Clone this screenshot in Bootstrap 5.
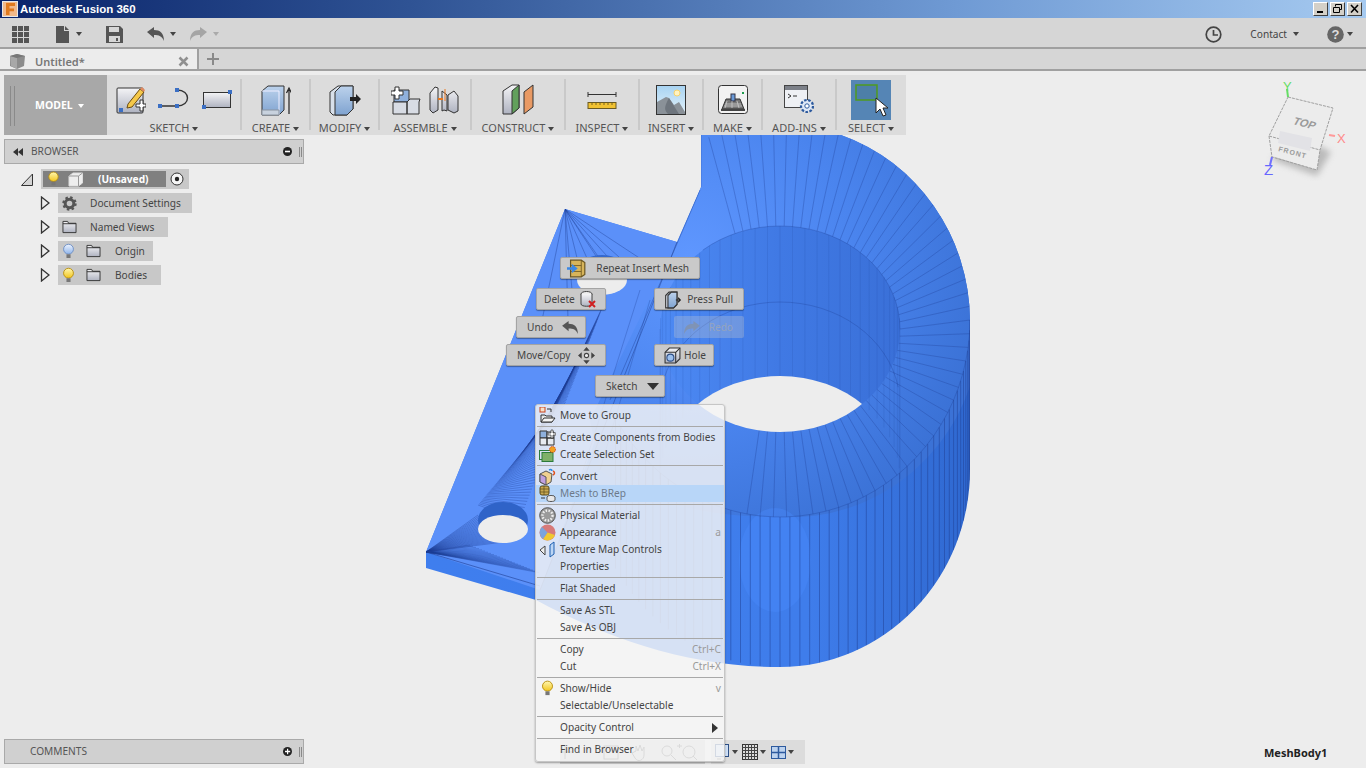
<!DOCTYPE html>
<html lang="en">
<head>
<meta charset="utf-8">
<title>Autodesk Fusion 360</title>
<link href="https://cdn.jsdelivr.net/npm/bootstrap@5.3.0/dist/css/bootstrap.min.css" rel="stylesheet">
<style>
html,body{height:768px;overflow:hidden}
body{background:#ededed;font-family:"Noto Sans","Liberation Sans",sans-serif;font-size:10.15px;color:#444;line-height:1.2}
.title-strip{height:18px;background:linear-gradient(90deg,#0a246a 0%,#2f5394 30%,#6f9ad4 70%,#a6caf0 100%);color:#fff;font:bold 11.5px "Liberation Sans",sans-serif}
.app-ico{width:16px;height:16px;margin:1px 2px;background:#e8e8e8}
.win-btn{width:15px;height:14px;background:#d4d0c8;border:1px solid;border-color:#fff #404040 #404040 #fff;margin-left:2px;padding:0}
.win-btn svg{display:block}
.top-strip{height:31px;background:#d6d6d6;border-bottom:2px solid #a0a0a0;padding-top:3px}
.tab-strip{height:22px;background:#d6d6d6;border-bottom:2px solid #a0a0a0}
.doc-tab{width:199px;background:#ececec;border-right:2px solid #a0a0a0;font-size:11px;font-weight:600;color:#777;padding-top:5px}
.stage{flex:1 1 auto;position:relative;padding:4px;min-height:0}
.model-canvas{position:absolute;left:0;top:-71px;width:1366px;height:768px}
.ribbon{position:relative;width:902px;height:60px;background:#dcdcdc}
.model-box{width:103px;background:#a8a8a8;color:#fff;font-weight:700;font-size:10.5px;padding-top:1px}
.grip{width:5px;height:40px;border-left:1px solid #8a8a8a;border-right:1px solid #8a8a8a;margin-left:6px}
.rib-group{position:relative;padding-top:3px}
.rib-group:not(:last-child)::after{content:"";position:absolute;right:-1px;top:4px;bottom:5px;width:2px;background:#c9c9c9}
.rib-icons{height:43px}
.gap-rib{gap:12px}
.rib-label{font-size:11px;color:#555;white-space:nowrap}
.caret-dn{display:inline-block;width:0;height:0;border-left:3.5px solid transparent;border-right:3.5px solid transparent;border-top:4.5px solid #444;vertical-align:middle;margin-left:3px}
.caret-lt{border-top-color:#aaa}
.caret-wh{border-top-color:#fff}
.w-a{width:134px}.w-b{width:69px}.w-c{width:92px}.w-d{width:94px}.w-e{width:74px}.w-f{width:64px}.w-g{width:59px}.w-h{width:74px}.w-i{width:70px}
.sel-tile{width:40px;height:40px;background:#5585b5;position:relative}
.side-head{position:relative;width:300px;height:25px;background:#d0d0d0;border:1px solid #a9a9a9;color:#555;font-size:10.15px}
.tree-wrap{position:relative;width:300px;padding:5px 0 0 17px}
.tree-row{height:20px;margin-bottom:4px}
.tree-chip{height:20px;background:#c8c8c8;color:#444}
.root-inner{height:16px;background:#808080;color:#fff;font-weight:700;margin-left:2px;width:123px}
.w-t1{width:148px}.w-t2{width:134px}.w-t3{width:110px}.w-t4{width:95px}.w-t5{width:103px}
.comments-bar{margin-top:auto}
.stage-col{height:100%;display:flex;flex-direction:column;align-items:flex-start}
.floating{position:absolute;left:0;top:-71px;width:1366px;height:768px;pointer-events:none}
.mark-btn{position:absolute;height:22px;padding:1px 10px 0;display:flex;align-items:center;background:#c9c9c9;border:1px solid #a4a4a4;border-radius:2px;box-shadow:0 1px 1px rgba(0,0,0,.35);color:#444;font-size:10.15px;white-space:nowrap}
.mark-btn.dim{--bs-btn-disabled-color:#95a4be;--bs-btn-disabled-bg:rgba(205,205,205,.3);--bs-btn-disabled-border-color:transparent;--bs-btn-disabled-opacity:1;background:rgba(205,205,205,.3);border-color:transparent;box-shadow:none;color:#95a4be}
.mb-a{left:560px;top:257px;width:140px}.mb-b{left:536px;top:288px;width:70px}.mb-c{left:654px;top:288px;width:90px}
.mb-d{left:516px;top:316px;width:70px}.mb-e{left:674px;top:316px;width:70px}.mb-f{left:506px;top:344px;width:100px}
.mb-g{left:654px;top:344px;width:60px;padding-right:7px}.mb-h{left:595px;top:375px;width:70px}
.ctx-menu{position:absolute;left:535px;top:404px;width:190px;height:358px;min-width:0;padding:2px 0 0;background:rgba(245,245,245,.83);border:1px solid #c6c6c6;border-radius:3px;box-shadow:0 1px 2px rgba(0,0,0,.35);margin:0;z-index:5}
.ctx-menu .dropdown-item{position:relative;height:17px;padding:0 5px 0 24px;font-size:10.15px;line-height:17px;color:#444;background:transparent}
.ctx-menu .dropdown-item.hot{background:#b8d6f8;color:#6d7a8a}
.ctx-menu .dropdown-divider{margin:2px 1px;height:1px;border-top:1px solid #a8a8a8;opacity:1}
.ctx-ico{position:absolute;left:3px;top:0;width:17px;height:17px}
.ctx-key{position:absolute;right:3px;top:0;color:#9a9a9a}
.arrow-rt{position:absolute;right:6px;top:4px;width:0;height:0;border-top:5px solid transparent;border-bottom:5px solid transparent;border-left:6px solid #333}
.nav-strip{position:absolute;top:740px;height:24px;background:#cfcfcf;align-items:center}
.nav-a{left:560px;width:145px}.nav-b{left:711px;width:94px;background:#dcdcdc}
.mesh-name{position:absolute;left:1264px;top:746px;font-weight:700;font-size:11px;color:#222}
.cube-svg{position:absolute;left:1250px;top:70px;width:110px;height:120px}
</style>
</head>
<body class="d-flex flex-column">
<svg width="0" height="0" class="position-absolute">
<defs>
<linearGradient id="gBulb" x1="0" y1="0" x2="0" y2="1"><stop offset="0" stop-color="#fff7b0"/><stop offset="1" stop-color="#f2c51c"/></linearGradient>
<linearGradient id="gBlueB" x1="0" y1="0" x2="0" y2="1"><stop offset="0" stop-color="#eef4ff"/><stop offset="1" stop-color="#8fb4ea"/></linearGradient>
<linearGradient id="gBox" x1="0" y1="0" x2="0" y2="1"><stop offset="0" stop-color="#f4f4f6"/><stop offset="1" stop-color="#aeb2c0"/></linearGradient>
<linearGradient id="gBlue" x1="0" y1="0" x2="0" y2="1"><stop offset="0" stop-color="#bcd2ec"/><stop offset="1" stop-color="#7fa3d0"/></linearGradient>
<symbol id="bulbY" viewBox="0 0 14 18"><circle cx="7" cy="6.5" r="5.3" fill="url(#gBulb)" stroke="#b98f10"/><rect x="4.8" y="12" width="4.4" height="4" fill="#777"/></symbol>
<symbol id="bulbB" viewBox="0 0 14 18"><circle cx="7" cy="6.5" r="5.3" fill="url(#gBlueB)" stroke="#6d8fc4"/><rect x="4.8" y="12" width="4.4" height="4" fill="#777"/></symbol>
<symbol id="folder" viewBox="0 0 16 15"><path d="M1 13.5V1.5h5l1 2h8v10z" fill="url(#gBox)" stroke="#333"/><path d="M1 4h14" stroke="#333"/></symbol>
<symbol id="triOpen" viewBox="0 0 10 14"><path d="M1.500 1 9 7l-7.500 6z" fill="#ededed" stroke="#333" stroke-width="1.300"/></symbol>
</defs>
</svg>

<header class="title-strip d-flex align-items-center">
  <span class="app-ico d-flex align-items-center justify-content-center"><svg width="14" height="14" viewBox="0 0 14 14"><rect width="14" height="14" fill="#f2b98a"/><path d="M3 1h9v3H6.500v2.500H11v2.700H6.500V13H3z" fill="#e07a1f"/></svg></span>
  <span>Autodesk Fusion 360</span>
  <span class="ms-auto d-flex me-1">
    <button class="win-btn" type="button" aria-label="Minimize"><svg width="13" height="12" viewBox="0 0 13 12"><rect x="3" y="8" width="6" height="2" fill="#000"/></svg></button>
    <button class="win-btn" type="button" aria-label="Restore"><svg width="13" height="12" viewBox="0 0 13 12"><path d="M4.500 3.500V1.500h6v5h-2M2.500 4.500h6v5h-6z" fill="none" stroke="#000"/></svg></button>
    <button class="win-btn" type="button" aria-label="Close"><svg width="13" height="12" viewBox="0 0 13 12"><path d="M3 2l7 7.500M10 2l-7 7.500" stroke="#000" stroke-width="1.600"/></svg></button>
  </span>
</header>

<nav class="top-strip d-flex align-items-center">
  <svg style="margin-left:12px;margin-right:27px" width="17" height="17" viewBox="0 0 17 17" fill="#555"><path d="M0 0h5v5H0zM6 0h5v5H6zM12 0h5v5h-5zM0 6h5v5H0zM6 6h5v5H6zM12 6h5v5h-5zM0 12h5v5H0zM6 12h5v5H6zM12 12h5v5h-5z"/></svg>
  <svg width="14" height="17" viewBox="0 0 14 17" fill="#555"><path d="M0 0h8v5h5v12H0zM9 0l4 4H9z"/></svg>
  <span class="caret-dn" style="margin-left:6px"></span>
  <svg style="margin-left:24px" width="17" height="17" viewBox="0 0 17 17"><path fill="#555" d="M0 0h14l3 3v14H0z"/><path fill="#d6d6d6" d="M3 1h10v5H3zM3 10h11v6H3z"/><path fill="#555" d="M10 12h2v3h-2z"/></svg>
  <svg class="ms-4" width="17" height="14" viewBox="0 0 17 14"><path fill="#555" d="M0 5 7 0v3c6 0 10 3 10 11-2-5-5-6-10-6v3z"/></svg>
  <span class="caret-dn" style="margin-left:6px"></span>
  <svg style="margin-left:14px" width="17" height="14" viewBox="0 0 17 14"><path fill="#a5a5a5" d="M17 5 10 0v3C4 3 0 6 0 14c2-5 5-6 10-6v3z"/></svg>
  <span class="caret-dn caret-lt" style="margin-left:6px"></span>
  <span class="ms-auto d-flex align-items-center">
    <svg width="17" height="17" viewBox="0 0 17 17"><circle cx="8.500" cy="8.500" r="7.300" fill="none" stroke="#444" stroke-width="1.700"/><path d="M8.500 4v5H13" fill="none" stroke="#444" stroke-width="1.700"/></svg>
    <span style="margin-left:28px">Contact</span><span class="caret-dn" style="margin-left:6px"></span>
    <svg style="margin-left:28px" width="17" height="17" viewBox="0 0 17 17"><circle cx="8.500" cy="8.500" r="8.300" fill="#666"/><text x="8.500" y="13" text-anchor="middle" fill="#ddd" font-family="Liberation Sans" font-weight="700" font-size="13">?</text></svg>
    <span class="caret-dn" style="margin-right:13px;margin-left:3px"></span>
  </span>
</nav>

<div class="tab-strip d-flex">
  <div class="doc-tab d-flex align-items-center">
    <svg class="ms-2" width="19" height="19" viewBox="0 0 19 19"><path d="M2 4l7-2 8 2-1 10-7 3-7-3z" fill="#8c8c8c"/><path d="M2 4l7 2v11l-6-3z" fill="#a8a8a8"/><path d="M2 4l7-2 8 2-8 2z" fill="#777"/></svg>
    <span class="ms-2">Untitled*</span>
    <svg class="ms-auto me-2" width="11" height="11" viewBox="0 0 11 11"><path d="M1.500 1.500l8 8M9.500 1.500l-8 8" stroke="#909090" stroke-width="2.500"/></svg>
  </div>
  <div class="d-flex align-items-center"><svg style="margin-left:8px" width="12" height="12" viewBox="0 0 12 12"><path d="M6 0v12M0 6h12" stroke="#8a8a8a" stroke-width="2"/></svg></div>
</div>

<main class="stage">
  <svg id="model" class="model-canvas" viewBox="0 0 1366 768" aria-hidden="true">
    <defs>
      <radialGradient id="gTop" gradientUnits="userSpaceOnUse" cx="690" cy="260" r="300"><stop offset="0" stop-color="#5f97ff"/><stop offset=".55" stop-color="#4a84ee"/><stop offset="1" stop-color="#3b72d6"/></radialGradient>
      <linearGradient id="gInner" x1="0" y1="0" x2="1" y2="0"><stop offset="0" stop-color="#4d8af4"/><stop offset=".5" stop-color="#4079e4"/><stop offset="1" stop-color="#3a70d8"/></linearGradient>
      <linearGradient id="gWall" x1="0" y1="0" x2="1" y2="0"><stop offset="0" stop-color="#3f7eee"/><stop offset=".7" stop-color="#3f7deb"/><stop offset="1" stop-color="#2f68d0"/></linearGradient>
      <clipPath id="cSil"><path d="M701,135 L841,135 A190,197 0 0 1 970,320 L970,470 A190,197 0 0 1 780,667 C690,667 610,640 536,600 L426,568 L426,552 L565,209 L677,242 L701,187 Z"/></clipPath>
      <clipPath id="cInner"><ellipse cx="780" cy="329" rx="120" ry="103"/></clipPath>
    </defs>
    <path d="M701,135 L841,135 A190,197 0 0 1 970,320 L970,470 A190,197 0 0 1 780,667 C690,667 610,640 536,600 L426,568 L426,552 L565,209 L677,242 L701,187 Z" fill="url(#gWall)"/>
    <path d="M565,209 L677,242 L610,400 L540,590 L426,552 Z" fill="#5b90f9"/>
    <g clip-path="url(#cSil)">
      <path d="M677,242 L701,187 L701,120 L860,120 L980,240 L980,340 A190,197 0 0 1 780,517 C700,517 640,500 600,470 L590,420 Z" fill="url(#gTop)"/>
      <ellipse cx="780" cy="329" rx="120" ry="103" fill="url(#gInner)"/>
      <ellipse cx="775" cy="560" rx="36" ry="52" fill="#4a8cff" opacity=".35"/>
      <g id="lines" fill="none" stroke="#1f3f94" stroke-opacity=".42" stroke-width="1"></g>
      <g clip-path="url(#cInner)"><ellipse cx="780" cy="479" rx="120" ry="103" fill="#ededed"/></g>
      <ellipse cx="602" cy="272" rx="25" ry="17" fill="#3568cc"/>
      <ellipse cx="602" cy="280" rx="25" ry="15" fill="#ededed"/>
      <ellipse cx="503" cy="520" rx="25" ry="18" fill="#2f63c8"/>
      <ellipse cx="503" cy="529" rx="25" ry="14" fill="#ededed"/>
    </g>
  </svg>

  <div class="stage-col position-relative">
    <section class="ribbon d-flex">
      <div class="model-box d-flex align-items-center">
        <span class="grip"></span>
        <span style="margin-left:20px">MODEL</span><span class="caret-dn caret-wh" style="margin-left:5px"></span>
      </div>
      <div class="rib-group w-a d-flex flex-column align-items-center">
        <div class="rib-icons d-flex align-items-center gap-rib">
          <svg width="30" height="30" viewBox="0 0 30 30"><rect x="1" y="3" width="26" height="25" rx="1" fill="url(#gBox)" stroke="#333"/><rect x="3" y="23" width="4" height="4" fill="#3b6fc4"/><path d="M12 19 24 4l4 3-12 15-5 1z" fill="#f5c84a" stroke="#6b4b10"/><path d="M24 4l4 3 1-2-3-3z" fill="#e08a60"/><path d="M20 19h4v-4h3v4h3v3h-3v4h-3v-4h-4z" fill="#fff" stroke="#333"/></svg>
          <svg width="32" height="24" viewBox="0 0 32 24"><path d="M2 18h18M19 2c14 0 14 16 0 16" fill="none" stroke="#333" stroke-width="1.400"/><rect x="0" y="16" width="4" height="4" fill="#3b6fc4"/><rect x="17" y="16" width="4" height="4" fill="#3b6fc4"/><rect x="17" y="0" width="4" height="4" fill="#3b6fc4"/></svg>
          <svg width="30" height="20" viewBox="0 0 30 20"><rect x="1.500" y="2.500" width="27" height="15" fill="url(#gBox)" stroke="#333"/><rect x="26" y="0" width="4" height="4" fill="#3b6fc4"/><rect x="0" y="15" width="4" height="4" fill="#3b6fc4"/></svg>
        </div>
        <div class="rib-label">SKETCH<span class="caret-dn"></span></div>
      </div>
      <div class="rib-group w-b d-flex flex-column align-items-center">
        <div class="rib-icons d-flex align-items-center">
          <svg width="30" height="32" viewBox="0 0 30 32"><path d="M1 7l6-5h16v24l-5 5H1z" fill="url(#gBlue)" stroke="#333"/><path d="M1 7h17v24" fill="none" stroke="#eef"/><path d="M1 26h17v5H1z" fill="#c8d2de" stroke="#8a94a0"/><path d="M28 30V6M25.500 9 28 4l2.500 5" fill="none" stroke="#222" stroke-width="1.200"/></svg>
        </div>
        <div class="rib-label">CREATE<span class="caret-dn"></span></div>
      </div>
      <div class="rib-group w-b d-flex flex-column align-items-center">
        <div class="rib-icons d-flex align-items-center">
          <svg width="32" height="32" viewBox="0 0 32 32"><path d="M1 8l8-6h15v23l-6 6H4l-3-3z" fill="#d8e0ea" stroke="#333"/><path d="M6 8l6-6h12v23l-6 6H6z" fill="url(#gBlue)" stroke="#333"/><path d="M21 13h6v-3l5 5-5 5v-3h-6z" fill="#222"/></svg>
        </div>
        <div class="rib-label">MODIFY<span class="caret-dn"></span></div>
      </div>
      <div class="rib-group w-c d-flex flex-column align-items-center">
        <div class="rib-icons d-flex align-items-center gap-2">
          <svg width="30" height="30" viewBox="0 0 30 30"><path d="M3 17V5h12l3 0v12z" fill="#8fb0dc" stroke="#333"/><path d="M2 17h14v12H2zM16 17l3-3h10l-1 3v12H16z" fill="#d8dce4" stroke="#333"/><path d="M0 6h4V2h4v4h4v4H8v4H4v-4H0z" fill="#fff" stroke="#333"/></svg>
          <svg width="30" height="30" viewBox="0 0 30 30"><path d="M1 8l5-6 3 1v22l-5 3-3-3zM13 6l5 4v16l-3-1-2 1zM19 10l6-4 4 5v15l-4 2-6-3z" fill="url(#gBox)" stroke="#333"/><path d="M9 14h5" stroke="#e8761c" stroke-width="2"/><path d="M16 4v12" stroke="#e8761c"/></svg>
        </div>
        <div class="rib-label">ASSEMBLE<span class="caret-dn"></span></div>
      </div>
      <div class="rib-group w-d d-flex flex-column align-items-center">
        <div class="rib-icons d-flex align-items-center">
          <svg width="32" height="32" viewBox="0 0 32 32"><path d="M1 7l9-6h7v23l-7 6H1z" fill="url(#gBox)" stroke="#333"/><path d="M10 7l7-6v23l-7 6z" fill="#62a05c" stroke="#333"/><path d="M22 8l9-7v22l-9 7z" fill="#e99a64" stroke="#333"/></svg>
        </div>
        <div class="rib-label">CONSTRUCT<span class="caret-dn"></span></div>
      </div>
      <div class="rib-group w-e d-flex flex-column align-items-center">
        <div class="rib-icons d-flex align-items-center">
          <svg width="30" height="22" viewBox="0 0 30 22"><path d="M1 3v5M29 3v5M1 5.500h28" stroke="#333" fill="none"/><rect x="1" y="13.500" width="28" height="6" fill="#f1c232" stroke="#6b5a20"/><path d="M5 14v2M9 14v2M13 14v2M17 14v2M21 14v2M25 14v2" stroke="#7a6420"/></svg>
        </div>
        <div class="rib-label">INSPECT<span class="caret-dn"></span></div>
      </div>
      <div class="rib-group w-f d-flex flex-column align-items-center">
        <div class="rib-icons d-flex align-items-center">
          <svg width="30" height="30" viewBox="0 0 30 30"><defs><linearGradient id="gSky" x1="0" y1="0" x2="0" y2="1"><stop offset="0" stop-color="#a7d3f2"/><stop offset="1" stop-color="#e4f2fa"/></linearGradient></defs><rect x=".5" y=".5" width="29" height="29" fill="url(#gSky)" stroke="#333"/><circle cx="21" cy="8" r="3" fill="#fff3c0" stroke="#f7d36b"/><path d="M1 29V17l9-5 3 1 5 7 5-3 6 10v2z" fill="#8a9198"/><path d="M13 13l10 16H12c-4-4-4-7 1-16z" fill="#6e757d"/></svg>
        </div>
        <div class="rib-label">INSERT<span class="caret-dn"></span></div>
      </div>
      <div class="rib-group w-g d-flex flex-column align-items-center">
        <div class="rib-icons d-flex align-items-center">
          <svg width="30" height="29" viewBox="0 0 30 29"><rect x=".5" y=".5" width="29" height="28" rx="3" fill="#f2f2f2" stroke="#333"/><rect x="24" y="7" width="2" height="2" fill="#1c9c4c"/><path d="M4 24l4-10h14l4 10z" fill="#777" stroke="#333"/><rect x="13" y="9" width="4" height="7" fill="#6a9ad8" stroke="#334"/><path d="M7 19h16M6 21h18M9 16l-2 7M14 16v7M19 16l2 7" stroke="#ccc" stroke-width=".8"/><rect x="3" y="24" width="24" height="2" fill="#444"/></svg>
        </div>
        <div class="rib-label">MAKE<span class="caret-dn"></span></div>
      </div>
      <div class="rib-group w-h d-flex flex-column align-items-center">
        <div class="rib-icons d-flex align-items-center">
          <svg width="30" height="29" viewBox="0 0 30 29"><rect x=".5" y=".5" width="23" height="22" fill="#eef0f4" stroke="#444"/><rect x="1" y="1" width="22" height="4" fill="#7c8088"/><path d="M4 9l3 2-3 2M9 11h4" fill="none" stroke="#333"/><circle cx="23" cy="21" r="6" fill="#dfe8f6" stroke="#2d5a9e" stroke-width="2.200" stroke-dasharray="2.600 1.500"/><circle cx="23" cy="21" r="2.200" fill="#fff" stroke="#2d5a9e"/></svg>
        </div>
        <div class="rib-label">ADD-INS<span class="caret-dn"></span></div>
      </div>
      <div class="rib-group w-i d-flex flex-column align-items-center">
        <div class="rib-icons d-flex align-items-center">
          <div class="sel-tile"><svg width="40" height="40" viewBox="0 0 40 40"><rect x="5" y="5" width="21" height="15" fill="#4d7fa8" stroke="#4f9a1f" stroke-width="1.500"/><path d="M25 18v15l4-4 3 7 3-1-3-7h5z" fill="#fff" stroke="#222"/></svg></div>
        </div>
        <div class="rib-label">SELECT<span class="caret-dn"></span></div>
      </div>
    </section>

    <section class="side-head d-flex align-items-center mt-1">
      <svg class="ms-2" width="10" height="8" viewBox="0 0 10 8" fill="#333"><path d="M5 0v8L0 4zM10 0v8L5 4z"/></svg>
      <span class="ms-2">BROWSER</span>
      <svg class="ms-auto" width="9" height="9" viewBox="0 0 9 9"><circle cx="4.500" cy="4.500" r="4.500" fill="#222"/><rect x="2" y="3.700" width="5" height="1.600" fill="#fff"/></svg>
      <span class="grip" style="height:10px;width:3px;margin:0 1px 0 7px"></span>
    </section>
    <section class="tree-wrap">
      <div class="tree-row d-flex align-items-center">
        <svg width="12" height="13" viewBox="0 0 12 13" class="me-2"><path d="M.5 12.500 11.500 1v11.500z" fill="#d4d4d4" stroke="#333"/></svg>
        <div class="tree-chip w-t1 d-flex align-items-center">
          <div class="root-inner d-flex align-items-center">
            <svg class="ms-1" width="13" height="16"><use href="#bulbY"/></svg>
            <svg class="ms-2" width="16" height="15" viewBox="0 0 16 15"><path d="M1 4l4-3h9.500v10l-4 3H1z" fill="#eee" stroke="#ddd"/><path d="M1 4h9.500v10M10.500 4l4-3" fill="none" stroke="#999"/></svg>
            <span style="margin-left:14px">(Unsaved)</span>
          </div>
          <svg class="ms-1" width="14" height="14" viewBox="0 0 14 14"><circle cx="7" cy="7" r="6" fill="#f5f5f5" stroke="#333"/><circle cx="7" cy="7" r="2.200" fill="#222"/></svg>
        </div>
      </div>
      <div class="tree-row d-flex align-items-center" style="margin-left:19px">
        <svg width="10" height="14" class="me-2"><use href="#triOpen"/></svg>
        <div class="tree-chip w-t2 d-flex align-items-center">
          <svg class="ms-1" width="15" height="15" viewBox="0 0 15 15"><circle cx="7.500" cy="7.500" r="4.300" fill="none" stroke="#555" stroke-width="3"/><circle cx="7.500" cy="7.500" r="6" fill="none" stroke="#555" stroke-width="2.400" stroke-dasharray="2.400 2.300"/></svg>
          <span style="margin-left:13px">Document Settings</span>
        </div>
      </div>
      <div class="tree-row d-flex align-items-center" style="margin-left:19px">
        <svg width="10" height="14" class="me-2"><use href="#triOpen"/></svg>
        <div class="tree-chip w-t3 d-flex align-items-center">
          <svg class="ms-1" width="15" height="14"><use href="#folder"/></svg>
          <span style="margin-left:13px">Named Views</span>
        </div>
      </div>
      <div class="tree-row d-flex align-items-center" style="margin-left:19px">
        <svg width="10" height="14" class="me-2"><use href="#triOpen"/></svg>
        <div class="tree-chip w-t4 d-flex align-items-center">
          <svg style="margin-left:4px" width="13" height="17"><use href="#bulbB"/></svg>
          <svg style="margin-left:11px" width="15" height="14"><use href="#folder"/></svg>
          <span style="margin-left:14px">Origin</span>
        </div>
      </div>
      <div class="tree-row d-flex align-items-center" style="margin-left:19px">
        <svg width="10" height="14" class="me-2"><use href="#triOpen"/></svg>
        <div class="tree-chip w-t5 d-flex align-items-center">
          <svg style="margin-left:4px" width="13" height="17"><use href="#bulbY"/></svg>
          <svg style="margin-left:11px" width="15" height="14"><use href="#folder"/></svg>
          <span style="margin-left:14px">Bodies</span>
        </div>
      </div>
    </section>
    <section class="side-head comments-bar d-flex align-items-center">
      <span style="margin-left:25px">COMMENTS</span>
      <svg class="ms-auto" width="9" height="9" viewBox="0 0 9 9"><circle cx="4.500" cy="4.500" r="4.500" fill="#222"/><path d="M2 3.700h2v-2h1.200v2h2v1.500h-2v2H4v-2H2z" fill="#fff"/></svg>
      <span class="grip" style="height:10px;width:3px;margin:0 1px 0 7px"></span>
    </section>
  </div>

  <div class="floating">
    <svg class="cube-svg" viewBox="1250 70 110 120" aria-label="View cube">
      <defs><filter id="fBlur"><feGaussianBlur stdDeviation="3"/></filter></defs>
      <path d="M1272 160l45 16 14-24-40-20z" fill="#999" opacity=".6" filter="url(#fBlur)"/>
      <path d="M1288 97l45 11-13 42-3 20-45-14-3-20z" fill="#ececec"/>
      <path d="M1288 97l45 11-13 42-51-14zM1269 136l3 21 45 13 3-20" fill="none" stroke="#a0a0a0" stroke-dasharray="3 1" stroke-width="1"/>
      <path d="M1280 131l32 7-2 13-32-8z" fill="#e2e2e6"/>
      <text transform="translate(1292 124) rotate(14) skewX(-15)" font-family="Liberation Sans" font-weight="700" font-size="11" fill="#9a9a9a">TOP</text>
      <text transform="translate(1278 151) rotate(15)" font-family="Liberation Sans" font-weight="700" font-size="7" letter-spacing="1" fill="#9a9a9a">FRONT</text>
      <path d="M1288 97l-1-8" stroke="#66dd66" stroke-width="2"/><text x="1283" y="91" font-family="Liberation Sans" font-size="13" fill="#66dd66">Y</text>
      <path d="M1329 135l6 1" stroke="#ff9a9a" stroke-width="2"/><text x="1337" y="143" font-family="Liberation Sans" font-size="13" fill="#ff8a8a">X</text>
      <path d="M1272 157l-2 8" stroke="#7070ff" stroke-width="2"/><text x="1264" y="175" font-family="Liberation Sans" font-size="15" fill="#6666ff">Z</text>
    </svg>

    <div class="nav-strip nav-a d-flex"></div>
    <div class="nav-strip nav-b d-flex">
      <svg style="margin-left:4px" width="15" height="16" viewBox="0 0 15 16"><rect x=".5" y=".5" width="13" height="12" fill="#cfe0f6" stroke="#2d4f86"/><path d="M2 15h4" stroke="#555"/></svg><span class="caret-dn" style="margin-left:2px"></span>
      <svg style="margin-left:4px" width="16" height="16" viewBox="0 0 16 16"><rect x=".5" y=".5" width="15" height="15" fill="#ddd" stroke="#333"/><path d="M3.500 0v16M6.500 0v16M9.500 0v16M12.500 0v16M0 3.500h16M0 6.500h16M0 9.500h16M0 12.500h16" stroke="#444"/></svg><span class="caret-dn" style="margin-left:2px"></span>
      <svg style="margin-left:5px" width="15" height="13" viewBox="0 0 15 13"><rect x=".5" y=".5" width="14" height="12" fill="#bcd2ee" stroke="#2d5a9e"/><path d="M7.500 0v13M0 6.500h15" stroke="#2d5a9e" stroke-width="1.500"/></svg><span class="caret-dn" style="margin-left:2px"></span>
    </div>
    <svg class="position-absolute" style="left:560px;top:742px" width="148" height="21" viewBox="0 0 148 21" fill="none" stroke="#555" aria-hidden="true">
      <path d="M5 3v14M0 10h12"/><rect x="44" y="4" width="14" height="13"/><path d="M76 9V4l2 5 2-6 2 6 2-4v8c0 5-6 8-9 3l-3-5z"/><circle cx="107" cy="9" r="5"/><path d="M111 13l5 5"/><path d="M117 4h5M119.500 2v4"/><circle cx="129" cy="10" r="6"/><path d="M133 14l4 4"/>
    </svg>

    <span class="mesh-name">MeshBody1</span>

    <button class="btn mark-btn mb-a" type="button">
      <svg style="margin-left:-4px" width="19" height="19" viewBox="0 0 16 16"><path d="M3 1h9l3 2v10l-3 2H3z" fill="#d7b45a" stroke="#6b5620"/><path d="M12 1v14M3 5.500h9M3 10.500h9" stroke="#6b5620" stroke-width=".7"/><path d="M0 8h4V5l5 4-5 4v-3H0z" fill="#3d88e4" transform="translate(0 -1)"/></svg>
      <span class="ms-auto">Repeat Insert Mesh</span>
    </button>
    <button class="btn mark-btn mb-b" type="button">
      <span style="margin-left:-3px">Delete</span>
      <svg class="ms-auto" style="margin-right:-2px" width="17" height="17" viewBox="0 0 17 17"><ellipse cx="6.500" cy="3" rx="5.500" ry="2.500" fill="#eee" stroke="#444"/><path d="M1 3v10c0 3 11 3 11 0V3" fill="url(#gBox)" stroke="#444"/><path d="M9 10l6 6M15 10l-6 6" stroke="#d02020" stroke-width="2"/></svg>
    </button>
    <button class="btn mark-btn mb-c" type="button">
      <svg style="margin-left:-1px" width="18" height="18" viewBox="0 0 15 16"><path d="M1 4l3-3h7v11l-3 3H1z" fill="#e0e6f0" stroke="#333"/><path d="M3 4l3-3h5v11l-3 3H3z" fill="url(#gBlue)" stroke="#333"/><path d="M10 8h4M12 6l2 2-2 2" stroke="#222" fill="none"/></svg>
      <span class="ms-auto">Press Pull</span>
    </button>
    <button class="btn mark-btn mb-d" type="button">
      <span>Undo</span>
      <svg class="ms-auto" style="margin-right:-3px" width="16" height="13" viewBox="0 0 17 14"><path fill="#555" d="M0 5 7 0v3c6 0 10 3 10 11-2-5-5-6-10-6v3z"/></svg>
    </button>
    <button class="btn mark-btn mb-e dim" type="button" disabled>
      <svg style="margin-left:-1px" width="16" height="13" viewBox="0 0 17 14"><path fill="#7f93b5" d="M17 5 10 0v3C4 3 0 6 0 14c2-5 5-6 10-6v3z"/></svg>
      <span class="ms-auto">Redo</span>
    </button>
    <button class="btn mark-btn mb-f" type="button">
      <span>Move/Copy</span>
      <svg class="ms-auto" width="17" height="17" viewBox="0 0 16 16" fill="#444"><path d="M8 0l3 3.500H5zM8 16l-3-3.500h6zM0 8l3.500-3v6zM16 8l-3.500 3V5z"/><circle cx="8" cy="8" r="2" fill="#eee" stroke="#444"/></svg>
    </button>
    <button class="btn mark-btn mb-g" type="button">
      <svg style="margin-left:-1px" width="17" height="17" viewBox="0 0 16 16"><path d="M1 5l4-4h10v10l-4 4H1z" fill="url(#gBox)" stroke="#333"/><path d="M1 5h10v10M11 5l4-4" fill="none" stroke="#333"/><circle cx="6" cy="10" r="3.300" fill="#9cc0ee" stroke="#2d4f86"/></svg>
      <span class="ms-auto">Hole</span>
    </button>
    <button class="btn mark-btn mb-h" type="button">
      <span>Sketch</span>
      <span class="ms-auto" style="width:0;height:0;border-left:6px solid transparent;border-right:6px solid transparent;border-top:7px solid #333;margin-right:-5px"></span>
    </button>

    <ul class="dropdown-menu show ctx-menu list-unstyled">
      <li><a class="dropdown-item" href="#"><svg class="ctx-ico" viewBox="0 0 17 17"><rect x="1" y="0" width="5" height="5" fill="#f5e0c8" stroke="#c8421c"/><path d="M8 2h4v3" fill="none" stroke="#333"/><path d="M2 15V8h4l1 1h6v6z" fill="#e8e8e8" stroke="#333"/><path d="M2 15l3-4h11l-3 4z" fill="#f5f5f5" stroke="#333"/></svg>Move to Group</a></li>
      <li><hr class="dropdown-divider"></li>
      <li><a class="dropdown-item" href="#"><svg class="ctx-ico" viewBox="0 0 17 17"><path d="M1 2h7v7H1z" fill="#8fb0dc" stroke="#333"/><path d="M1 9h7v7H1zM8 9h7v7H8zM8 3h7v6H8z" fill="#e8ebf0" stroke="#333"/><path d="M9 4h3V1h2v3h3v2h-3v3h-2V6H9z" fill="#fff" stroke="#333" stroke-width=".7"/></svg>Create Components from Bodies</a></li>
      <li><a class="dropdown-item" href="#"><svg class="ctx-ico" viewBox="0 0 17 17"><rect x=".5" y="4.500" width="11" height="9" fill="none" stroke="#2c7a3a"/><rect x="3" y="6.500" width="11" height="9" fill="#7fb069" stroke="#2c7a3a"/><circle cx="13.500" cy="3.500" r="3" fill="#f0a020" stroke="#d03010" stroke-dasharray="1 1"/></svg>Create Selection Set</a></li>
      <li><hr class="dropdown-divider"></li>
      <li><a class="dropdown-item" href="#"><svg class="ctx-ico" viewBox="0 0 17 17"><path d="M1 6l6-3 6 3-1 8-5 3-6-3z" fill="#f0d090" stroke="#555"/><path d="M1 6l6 3v8l-6-3z" fill="#c0a0e0" stroke="#555"/><path d="M10 2c2-1 3 0 3 1" stroke="#2d8ae0" fill="none" stroke-width="1.500"/><path d="M14 3c2 1 2 3 0 4" stroke="#e0501c" fill="none" stroke-width="1.500"/></svg>Convert</a></li>
      <li><a class="dropdown-item hot" href="#"><svg class="ctx-ico" viewBox="0 0 17 17"><rect x="1" y="1" width="9" height="9" rx="2" fill="#c8a850" stroke="#5c4a18"/><path d="M1 4h9M1 7h9M5 1v9" stroke="#5c4a18" stroke-width=".7"/><ellipse cx="12" cy="12" rx="4" ry="1.500" fill="#f5f5f5" stroke="#555"/><path d="M8 12v3c0 2 8 2 8 0v-3" fill="#e8e8e8" stroke="#555"/><path d="M2 13h4" stroke="#333"/></svg>Mesh to BRep</a></li>
      <li><hr class="dropdown-divider"></li>
      <li><a class="dropdown-item" href="#"><svg class="ctx-ico" viewBox="0 0 17 17"><circle cx="8.500" cy="8.500" r="7.800" fill="#9a9a9a" stroke="#555"/><circle cx="8.500" cy="8.500" r="5" fill="none" stroke="#eee" stroke-width="2.400" stroke-dasharray="1.500 1.500"/></svg>Physical Material</a></li>
      <li><a class="dropdown-item" href="#"><svg class="ctx-ico" viewBox="0 0 17 17"><circle cx="8.500" cy="8.500" r="8" fill="#d77a7a"/><path d="M8.500 8.500 16 11a8 8 0 0 1-12 4z" fill="#f0c830"/><path d="M8.500 8.500 4 15A8 8 0 0 1 3 3z" fill="#7ba4dc"/></svg>Appearance<span class="ctx-key">a</span></a></li>
      <li><a class="dropdown-item" href="#"><svg class="ctx-ico" viewBox="0 0 17 17"><path d="M1 9l5-4v9z" fill="#eee" stroke="#444"/><path d="M11 4l4-3v12l-4 3z" fill="#bcd6f5" stroke="#1c5fb0"/></svg>Texture Map Controls</a></li>
      <li><a class="dropdown-item" href="#">Properties</a></li>
      <li><hr class="dropdown-divider"></li>
      <li><a class="dropdown-item" href="#">Flat Shaded</a></li>
      <li><hr class="dropdown-divider"></li>
      <li><a class="dropdown-item" href="#">Save As STL</a></li>
      <li><a class="dropdown-item" href="#">Save As OBJ</a></li>
      <li><hr class="dropdown-divider"></li>
      <li><a class="dropdown-item" href="#">Copy<span class="ctx-key">Ctrl+C</span></a></li>
      <li><a class="dropdown-item" href="#">Cut<span class="ctx-key">Ctrl+X</span></a></li>
      <li><hr class="dropdown-divider"></li>
      <li><a class="dropdown-item" href="#"><svg class="ctx-ico" viewBox="0 0 14 18"><use href="#bulbY"/></svg>Show/Hide<span class="ctx-key">v</span></a></li>
      <li><a class="dropdown-item" href="#">Selectable/Unselectable</a></li>
      <li><hr class="dropdown-divider"></li>
      <li><a class="dropdown-item" href="#">Opacity Control<span class="arrow-rt"></span></a></li>
      <li><hr class="dropdown-divider"></li>
      <li><a class="dropdown-item" href="#">Find in Browser</a></li>
    </ul>
  </div>
</main>

<script>
(function(){
  var g=document.getElementById('lines'),o=[];
  function L(a,b,c,d,op){o.push('<line x1="'+a.toFixed(1)+'" y1="'+b.toFixed(1)+'" x2="'+c.toFixed(1)+'" y2="'+d.toFixed(1)+'"'+(op?' stroke-opacity="'+op+'"':'')+'/>');}
  var cx=780,cy=320,R=190,RY=197,ix=780,iy=329,rx=120,ry=103,t,a;
  for(t=-112;t<=100;t+=4){a=t*Math.PI/180;L(ix+rx*Math.cos(a),iy+ry*Math.sin(a),cx+R*Math.cos(a),cy+RY*Math.sin(a),.32);}
  for(t=0;t<=150;t+=3){a=t*Math.PI/180;var x=cx+R*Math.cos(a),y=cy+RY*Math.sin(a);L(x,y,x,y+150,.5);}
  for(t=-180;t<=0;t+=6){a=t*Math.PI/180;var u=ix+rx*Math.cos(a),v=iy+ry*Math.sin(a);L(u,v,u,v+150,.14);}
  var P=[];for(t=0;t<=150;t+=4){a=t*Math.PI/180;P.push((cx+R*Math.cos(a)).toFixed(1)+','+(cy+RY*Math.sin(a)).toFixed(1));}
  o.push('<polyline points="'+P.join(' ')+'" stroke-opacity=".3"/>');
  P=[];for(t=-130;t<=0;t+=5){a=t*Math.PI/180;P.push((ix+rx*Math.cos(a)).toFixed(1)+','+(iy+ry*Math.sin(a)).toFixed(1));}
  o.push('<polyline points="'+P.join(' ')+'" stroke-opacity=".3"/>');
  P=[];for(t=-170;t<=-10;t+=5){a=t*Math.PI/180;P.push((ix+rx*Math.cos(a)).toFixed(1)+','+(iy+76+ry*Math.sin(a)).toFixed(1));}
  o.push('<polyline points="'+P.join(' ')+'" stroke-opacity=".3"/>');
  var f=[[590,265],[602,262],[615,265],[628,265],[650,265],[580,270],[600,262],[572,290],[568,320],[540,330]];
  f.forEach(function(p){L(565,209,p[0],p[1],.4);});
  for(t=0;t<24;t++){L(426,552,478+t*.9,515+t*1.2,.35);L(426,552,470+t*3,545+t*1.2,.3);}
  for(t=0;t<70;t++){L(478+t*1.05,505-t*1.25,520+t*1.2,520-t*3.1,.32);}
  L(677,242,540,590,.5);L(610,400,700,190,.4);L(426,552,540,586,.6);L(701,187,701,135,.3);
  L(650,300,600,470,.3);L(640,290,580,480,.3);
  g.innerHTML=o.join('');
})();
</script>
<script src="https://cdn.jsdelivr.net/npm/bootstrap@5.3.0/dist/js/bootstrap.bundle.min.js"></script>
</body>
</html>
